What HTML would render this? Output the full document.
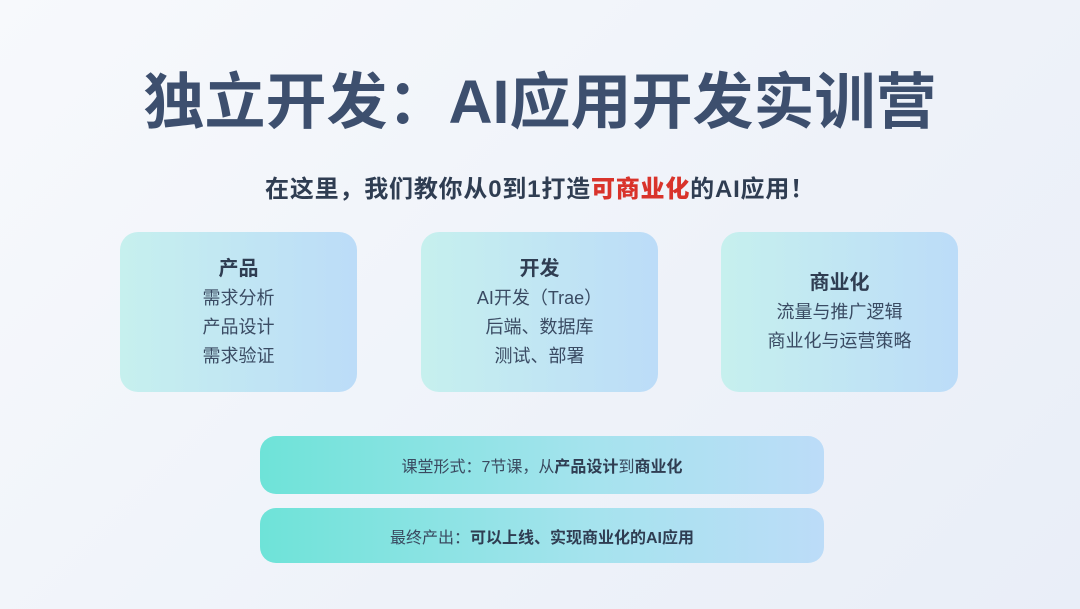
<!DOCTYPE html>
<html><head><meta charset="utf-8"><style>
*{margin:0;padding:0;box-sizing:border-box}
body{width:1080px;height:609px;overflow:hidden;background:linear-gradient(135deg,#f7f9fc 0%,#eef2f9 60%,#e9eef8 100%);font-family:"Liberation Sans","Noto Sans CJK SC",sans-serif;color:#3b4a63;position:relative}
.t{position:absolute;left:0;width:1080px;text-align:center;top:62px;font-size:61px;font-weight:bold;color:#3d4f6e;line-height:80px}
.s{position:absolute;left:0;width:1080px;text-align:center;top:175px;font-size:24px;font-weight:bold;color:#2f3d52;line-height:30px;letter-spacing:0.8px}
.s b{color:#d9332b}
.c{position:absolute;top:232px;width:237px;height:160px;border-radius:18px;background:linear-gradient(90deg,#c6f0ee,#bcdcf8);text-align:center;font-size:18px;line-height:29px;color:#3a4b63;display:flex;flex-direction:column;justify-content:center}
.c h3{font-size:20px;font-weight:bold;color:#2f3d52;line-height:30px}
.b{position:absolute;left:260px;width:564px;border-radius:16px;background:linear-gradient(90deg,#6ee3d8,#a6e3ee 60%,#bcdcf8);text-align:center;font-size:16px;color:#3a4a60;display:flex;align-items:center;justify-content:center}
.b b{color:#2f3d52}
</style></head><body>
<div class="t">独立开发：AI应用开发实训营</div>
<div class="s">在这里，我们教你从0到1打造<b>可商业化</b>的AI应用！</div>
<div class="c" style="left:120px"><h3>产品</h3><div>需求分析</div><div>产品设计</div><div>需求验证</div></div>
<div class="c" style="left:421px"><h3>开发</h3><div>AI开发（Trae）</div><div>后端、数据库</div><div>测试、部署</div></div>
<div class="c" style="left:721px"><h3>商业化</h3><div>流量与推广逻辑</div><div>商业化与运营策略</div></div>
<div class="b" style="top:436px;height:58px">课堂形式：7节课，从<b>产品设计</b>到<b>商业化</b></div>
<div class="b" style="top:508px;height:55px">最终产出：<b>可以上线、实现商业化的AI应用</b></div>
</body></html>
